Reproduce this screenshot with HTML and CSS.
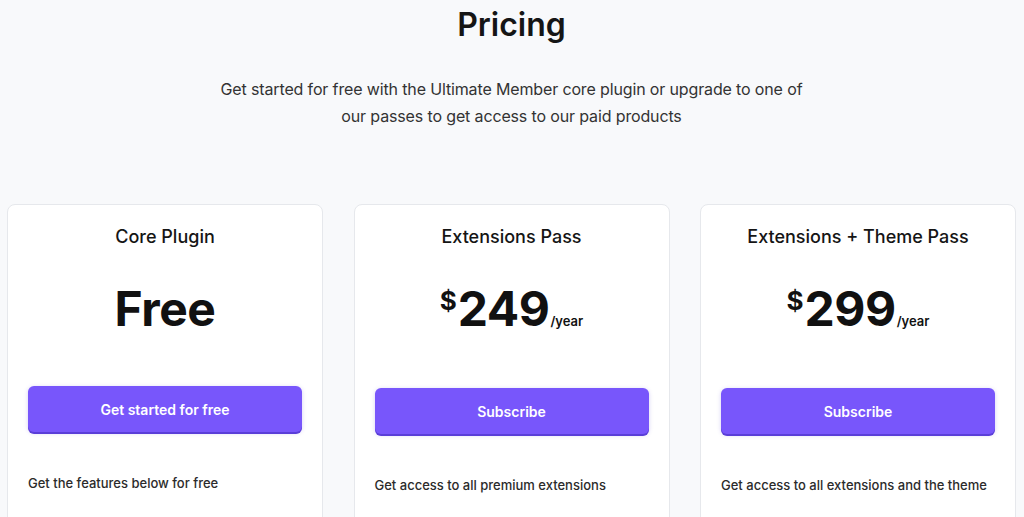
FILE: index.html
```html
<!DOCTYPE html>
<html lang="en">
<head>
<meta charset="utf-8">
<title>Pricing</title>
<link rel="stylesheet" href="styles.css">
</head>
<body>
<main class="page">
  <header class="intro">
    <h1 class="intro-title">Pricing</h1>
    <p class="intro-text">Get started for free with the Ultimate Member core plugin or upgrade to one of our passes to get access to our paid products</p>
  </header>
  <section class="plans">
    <article class="plan">
      <h2 class="plan-name">Core Plugin</h2>
      <div class="plan-price"><span class="amount">Free</span></div>
      <a class="plan-btn" href="#">Get started for free</a>
      <p class="plan-desc">Get the features below for free</p>
    </article>
    <article class="plan">
      <h2 class="plan-name">Extensions Pass</h2>
      <div class="plan-price"><span class="currency">$</span><span class="amount">249</span><span class="period">/year</span></div>
      <a class="plan-btn" href="#">Subscribe</a>
      <p class="plan-desc">Get access to all premium extensions</p>
    </article>
    <article class="plan">
      <h2 class="plan-name">Extensions + Theme Pass</h2>
      <div class="plan-price"><span class="currency">$</span><span class="amount">299</span><span class="period">/year</span></div>
      <a class="plan-btn" href="#">Subscribe</a>
      <p class="plan-desc">Get access to all extensions and the theme</p>
    </article>
  </section>
</main>
</body>
</html>
```

FILE: styles.css
```css
* { box-sizing: border-box; }
html, body { margin: 0; padding: 0; }
body {
  background: #f8f9fb;
  font-family: Inter, "Noto Sans", "Liberation Sans", sans-serif;
  color: #111;
  overflow: hidden;
}
.page {
  padding: 5px 8px 0 7px;
}
.intro {
  display: flex;
  flex-direction: column;
  align-items: center;
  text-align: center;
}
.intro-title {
  margin: 0;
  font-size: 32px;
  line-height: 40px;
  font-weight: 600;
  color: #151515;
}
.intro-text {
  margin: 31px 0 0;
  max-width: 600px;
  font-size: 16px;
  line-height: 27px;
  font-weight: 400;
  letter-spacing: -0.14px;
  color: #333;
}
.plans {
  margin-top: 74px;
  display: grid;
  grid-template-columns: repeat(3, 316px);
  column-gap: 30.5px;
}
.plan {
  background: #fff;
  border: 1px solid #e6e8ec;
  border-radius: 8px;
  padding: 19px 20px 40px;
  display: flex;
  flex-direction: column;
  min-height: 330px;
}
.plan-name {
  margin: 0;
  text-align: center;
  font-size: 18px;
  line-height: 26px;
  font-weight: 500;
  color: #151515;
}
.plan-price {
  margin-top: 30px;
  display: flex;
  justify-content: center;
  align-items: baseline;
  height: 58px;
  color: #111;
}
.amount {
  font-size: 48px;
  line-height: 58px;
  font-weight: 700;
  letter-spacing: -0.5px;
}
.currency {
  font-size: 26px;
  font-weight: 700;
  align-self: flex-start;
  line-height: 26px;
  margin-top: 8px;
  margin-right: 1px;
}
.period {
  font-size: 13px;
  font-weight: 600;
  margin-left: 1px;
}
.plan-btn {
  margin-top: 48px;
  height: 46px;
  display: flex;
  align-items: center;
  justify-content: center;
  background: #7856fb;
  border-radius: 6px;
  box-shadow: 0 2px 0 #5a3ed8, 0 1px 4px rgba(90, 62, 216, 0.25);
  color: #fff;
  font-size: 14px;
  font-weight: 600;
  text-decoration: none;
}
.plan-btn + .plan-desc { margin-top: 41px; }
.plan:not(:first-child) .plan-btn { margin-top: 50px; }
.plan-desc {
  margin: 0;
  font-size: 13px;
  line-height: 20px;
  font-weight: 500;
  color: #2b2b2b;
}
```
